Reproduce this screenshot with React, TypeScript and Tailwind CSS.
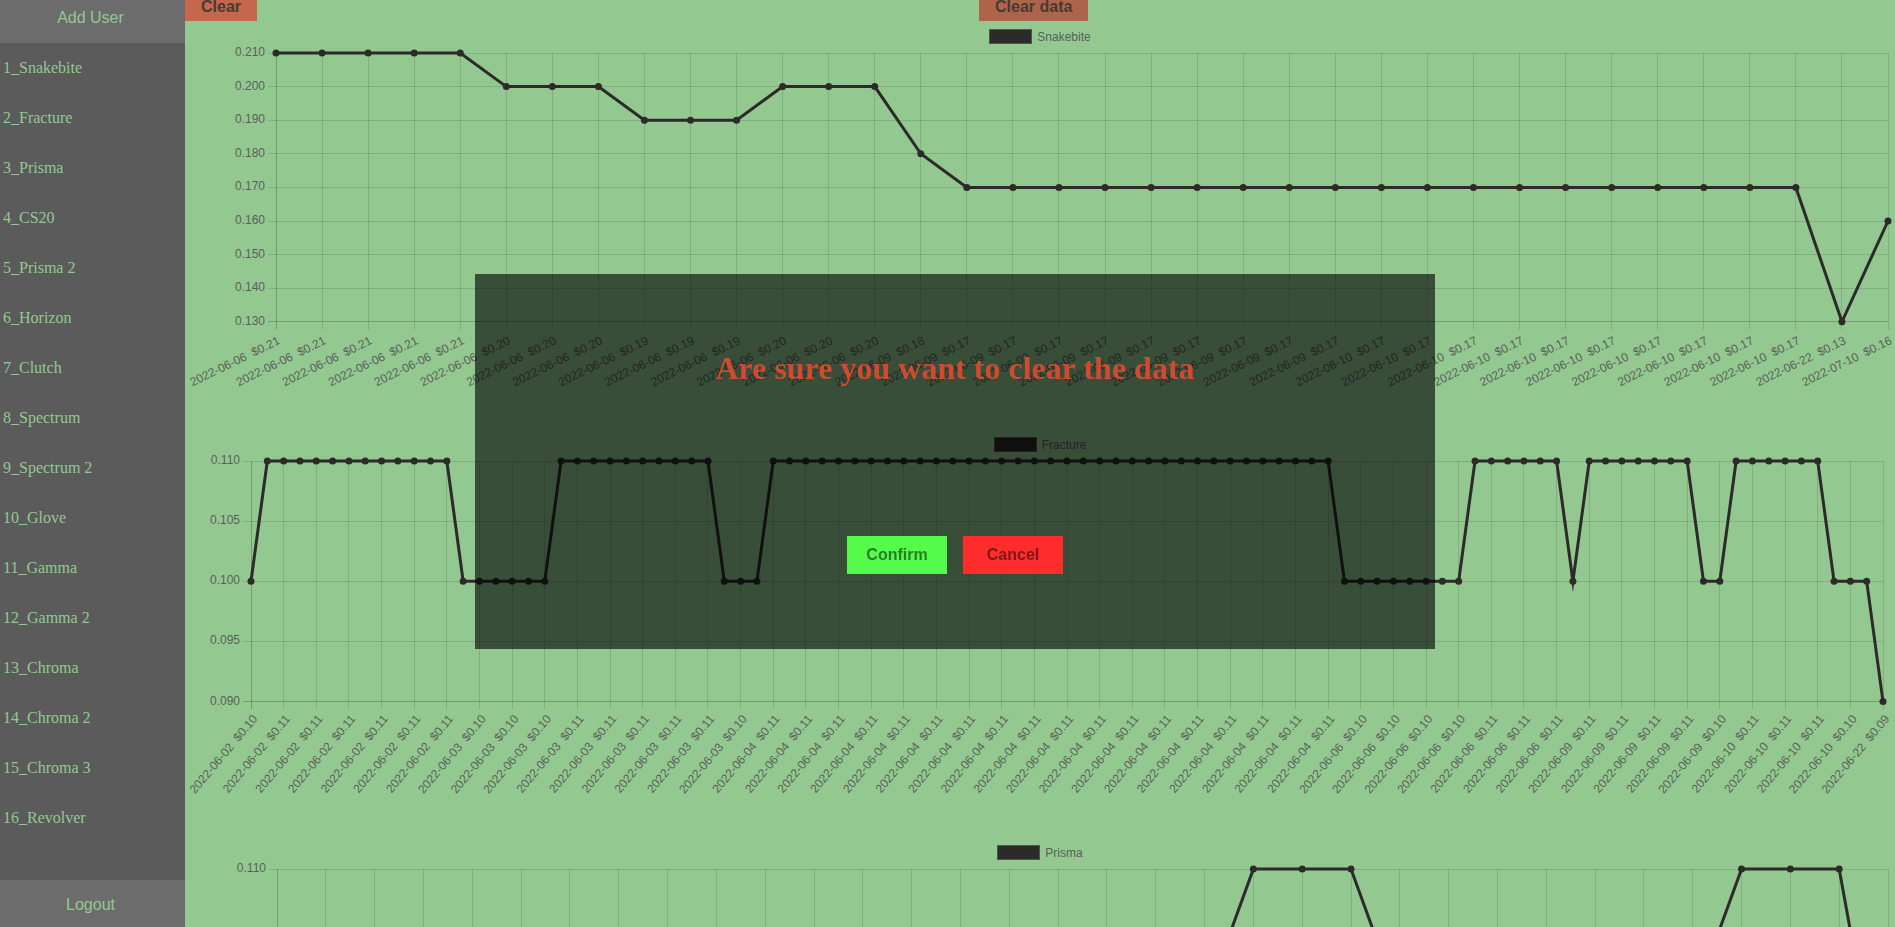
import React from "react";

type Point = { date: string; value: number };
type Run = [string, number, number];

const expand = (runs: Run[]): Point[] =>
  runs.flatMap(([date, value, count]) => Array.from({ length: count }, () => ({ date, value })));

type ChartSpec = {
  name: string;
  points: Point[];
  ticks: number[];
  left: number;
  right: number;
  bottom: number;
  labelEvery: number;
  angle: number;
  labelOffset: [number, number];
};

const charts: ChartSpec[] = [
  {
    name: "Snakebite",
    points: expand([
      ["2022-06-06", 0.21, 5],
      ["2022-06-06", 0.2, 3],
      ["2022-06-06", 0.19, 3],
      ["2022-06-06", 0.2, 3],
      ["2022-06-09", 0.18, 1],
      ["2022-06-09", 0.17, 9],
      ["2022-06-10", 0.17, 10],
      ["2022-06-22", 0.13, 1],
      ["2022-07-10", 0.16, 1],
    ]),
    ticks: [0.21, 0.2, 0.19, 0.18, 0.17, 0.16, 0.15, 0.14, 0.13],
    left: 91,
    right: 1703,
    bottom: 300.8,
    labelEvery: 1,
    angle: 26,
    labelOffset: [3, 18],
  },
  {
    name: "Fracture",
    points: expand([
      ["2022-06-02", 0.1, 1],
      ["2022-06-02", 0.11, 12],
      ["2022-06-03", 0.1, 6],
      ["2022-06-03", 0.11, 10],
      ["2022-06-03", 0.1, 3],
      ["2022-06-04", 0.11, 35],
      ["2022-06-06", 0.1, 8],
      ["2022-06-06", 0.11, 6],
      ["2022-06-09", 0.1, 1],
      ["2022-06-09", 0.11, 7],
      ["2022-06-09", 0.1, 2],
      ["2022-06-10", 0.11, 6],
      ["2022-06-10", 0.1, 3],
      ["2022-06-22", 0.09, 1],
    ]),
    ticks: [0.11, 0.105, 0.1, 0.095, 0.09],
    left: 66,
    right: 1698,
    bottom: 272.6,
    labelEvery: 2,
    angle: 50,
    labelOffset: [4, 15],
  },
  {
    name: "Prisma",
    points: expand([
      ["2022-06-06", 0.1, 20],
      ["2022-06-09", 0.11, 3],
      ["2022-06-09", 0.1, 7],
      ["2022-06-10", 0.11, 3],
      ["2022-06-22", 0.09, 1],
    ]),
    ticks: [0.11, 0.105, 0.1, 0.095, 0.09],
    left: 92,
    right: 1703,
    bottom: 300.8,
    labelEvery: 1,
    angle: 26,
    labelOffset: [3, 18],
  },
];

const TOP = 32;

function LineChart({
  name,
  points,
  ticks,
  left,
  right,
  bottom,
  labelEvery,
  angle,
  labelOffset: [dx, dy],
}: ChartSpec) {
  const max = ticks[0];
  const min = ticks[ticks.length - 1];
  const x = (i: number) => left + (i * (right - left)) / (points.length - 1);
  const y = (v: number) => TOP + ((max - v) / (max - min)) * (bottom - TOP);
  const crisp = (n: number) => Math.floor(n) + 0.5;
  const line = points.map((p, i) => `${x(i)},${y(p.value)}`).join(" ");

  return (
    <div className="relative">
      <svg
        viewBox="0 0 1710 408"
        className="block w-full font-['Liberation_Sans',Arial,sans-serif] text-xs"
        role="img"
        aria-label={name}
      >
        {ticks.map((t, i) => (
          <g key={t}>
            <line
              x1={left - 8}
              x2={right}
              y1={crisp(y(t))}
              y2={crisp(y(t))}
              stroke="#000"
              strokeOpacity={i === ticks.length - 1 ? 0.22 : 0.12}
            />
            <text x={left - 11} y={Math.round(y(t)) + 3} textAnchor="end" fill="#5a5f5a">
              {t.toFixed(3)}
            </text>
          </g>
        ))}
        {points.map((p, i) =>
          i % labelEvery === 0 ? (
            <g key={i}>
              <line
                x1={crisp(x(i))}
                x2={crisp(x(i))}
                y1={TOP}
                y2={bottom + 8}
                stroke="#000"
                strokeOpacity={i === 0 ? 0.22 : 0.12}
              />
              <text
                transform={`translate(${x(i) + dx} ${bottom + dy}) rotate(${-angle})`}
                dy={4}
                textAnchor="end"
                fill="#5a5f5a"
                className="whitespace-pre"
              >
                {`${p.date}  $${p.value.toFixed(2)}`}
              </text>
            </g>
          ) : null,
        )}
        <polyline points={line} fill="none" stroke="#2d2a2a" strokeWidth={3} strokeMiterlimit={12} />
        {points.map((p, i) => (
          <circle key={i} cx={x(i)} cy={y(p.value)} r={3.5} fill="#2d2a2a" />
        ))}
      </svg>
      <div className="absolute inset-x-0 top-2 flex items-center justify-center gap-[5px] font-['Liberation_Sans',Arial,sans-serif] text-xs leading-[14px] text-[#5a5f5a]">
        <span className="h-[15px] w-[43px] border border-[#4a5a49] bg-[#2d2a2a]" />
        <span>{name}</span>
      </div>
    </div>
  );
}

const cases = [
  "Snakebite", "Fracture", "Prisma", "CS20", "Prisma 2", "Horizon", "Clutch", "Spectrum",
  "Spectrum 2", "Glove", "Gamma", "Gamma 2", "Chroma", "Chroma 2", "Chroma 3", "Revolver",
];

export default function App() {
  return (
    <div className="flex h-screen overflow-hidden bg-[#93c990]">
      <aside className="flex w-[185px] shrink-0 flex-col bg-[#5b5b5b] text-[#93c990]">
        <button className="h-[43px] shrink-0 bg-[#6c6c6c] pr-1 pb-2 font-['Liberation_Sans',Arial,sans-serif] text-base">
          Add User
        </button>
        <nav className="min-h-0 flex-1 overflow-hidden font-['Liberation_Serif',serif] text-base">
          {cases.map((name, i) => (
            <a key={name} href={`#${i + 1}`} className="flex h-[50px] items-center pl-[3px]">
              {i + 1}_{name}
            </a>
          ))}
        </nav>
        <button className="h-[47px] shrink-0 bg-[#6c6c6c] pt-0.5 pr-1 font-['Liberation_Sans',Arial,sans-serif] text-base">
          Logout
        </button>
      </aside>

      <main className="flex min-w-0 flex-1 flex-col overflow-hidden">
        <div className="-mt-[7px] grid shrink-0 grid-cols-[794fr_916fr] font-['Liberation_Sans',Arial,sans-serif] text-base font-bold text-[#483a34]">
          <button className="h-7 justify-self-start bg-[#c5674d] px-4">Clear</button>
          <button className="h-7 justify-self-start bg-[#ae644b] px-4">Clear data</button>
        </div>
        {charts.map((chart) => (
          <LineChart key={chart.name} {...chart} />
        ))}
      </main>

      <div className="fixed inset-0 flex items-center justify-center pb-1 pl-[15px]">
        <div
          role="dialog"
          aria-labelledby="clear-title"
          className="flex h-[375px] w-[960px] flex-col items-center justify-between bg-black/61 pt-[76px] pb-[75px]"
        >
          <h1 id="clear-title" className="font-['Liberation_Serif',serif] text-[32px] leading-9 font-bold text-[#d04a30]">
            Are sure you want to clear the data
          </h1>
          <div className="flex gap-4 font-['Liberation_Sans',Arial,sans-serif] text-base font-bold">
            <button className="h-[38px] w-[100px] bg-[#55fb4a] text-[#2a7d25]">Confirm</button>
            <button className="h-[38px] w-[100px] bg-[#ff2c2c] text-[#801616]">Cancel</button>
          </div>
        </div>
      </div>
    </div>
  );
}
